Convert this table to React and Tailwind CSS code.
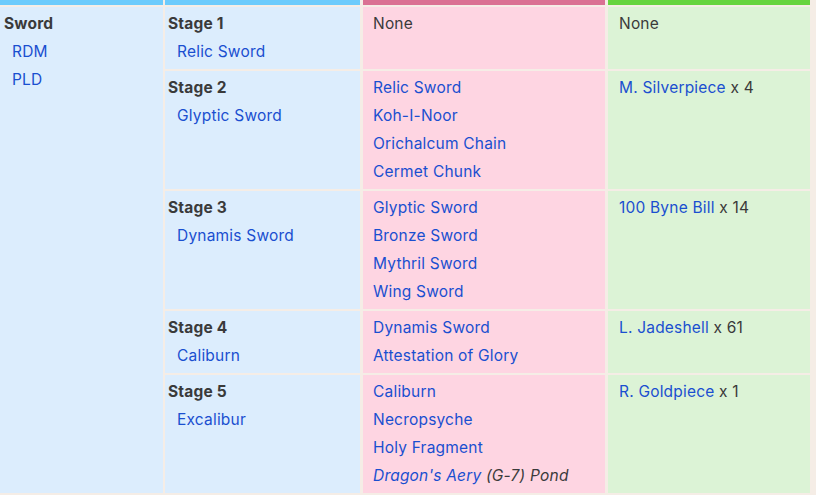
import React from "react";

const L = ({ children }) => <span className="text-[#1a4fd0]">{children}</span>;

function Cell({ w, bg, ml, pl, children }) {
  return (
    <div className={`${w} ${bg} ${ml} ${pl} pt-[3px] shrink-0`}>{children}</div>
  );
}

const rows = [
  {
    h: "h-[62px]",
    stage: "Stage 1",
    weapon: "Relic Sword",
    mats: null,
    cost: null,
  },
  {
    h: "h-[118px]",
    stage: "Stage 2",
    weapon: "Glyptic Sword",
    mats: ["Relic Sword", "Koh-I-Noor", "Orichalcum Chain", "Cermet Chunk"],
    cost: ["M. Silverpiece", "4"],
  },
  {
    h: "h-[118px]",
    stage: "Stage 3",
    weapon: "Dynamis Sword",
    mats: ["Glyptic Sword", "Bronze Sword", "Mythril Sword", "Wing Sword"],
    cost: ["100 Byne Bill", "14"],
  },
  {
    h: "h-[62px]",
    stage: "Stage 4",
    weapon: "Caliburn",
    mats: ["Dynamis Sword", "Attestation of Glory"],
    cost: ["L. Jadeshell", "61"],
  },
  {
    h: "h-[118px]",
    stage: "Stage 5",
    weapon: "Excalibur",
    mats: ["Caliburn", "Necropsyche", "Holy Fragment", "__pond"],
    cost: ["R. Goldpiece", "1"],
  },
];

export default function App() {
  return (
    <div
      className="w-[816px] h-[495px] bg-[#f5ede6] overflow-hidden text-[15.5px] tracking-[0.2px] leading-[28px] text-[#3a3a3a]"
      style={{ fontFamily: "Inter, 'Noto Sans', sans-serif" }}
    >
      <div className="flex h-[5px]">
        <div className="w-[163px] bg-[#6ccbfc]" />
        <div className="w-[195px] ml-[2px] bg-[#6ccbfc]" />
        <div className="w-[242px] ml-[3px] bg-[#da7193]" />
        <div className="w-[202px] ml-[3px] bg-[#66d43f]" />
      </div>
      <div className="flex mt-[2px]">
        <div className="w-[163px] h-[486px] bg-[#dcedfd] pl-[4px] pt-[3px] shrink-0">
          <div className="font-bold">Sword</div>
          <div className="ml-[8px]"><L>RDM</L></div>
          <div className="ml-[8px]"><L>PLD</L></div>
        </div>
        <div className="flex flex-col gap-[2px]">
          {rows.map((r, i) => (
            <div key={i} className={`flex ${r.h}`}>
              <Cell w="w-[195px]" bg="bg-[#dcedfd]" ml="ml-[2px]" pl="pl-[3px]">
                <div className="font-bold">{r.stage}</div>
                <div className="ml-[9px]"><L>{r.weapon}</L></div>
              </Cell>
              <Cell w="w-[242px]" bg="bg-[#fed5e2]" ml="ml-[3px]" pl="pl-[10px]">
                {r.mats ? (
                  r.mats.map((m) =>
                    m === "__pond" ? (
                      <div key={m} className="italic">
                        <L>Dragon's Aery</L> (G-7) Pond
                      </div>
                    ) : (
                      <div key={m}><L>{m}</L></div>
                    )
                  )
                ) : (
                  <div>None</div>
                )}
              </Cell>
              <Cell w="w-[202px]" bg="bg-[#dcf3d6]" ml="ml-[3px]" pl="pl-[11px]">
                {r.cost ? (
                  <div>
                    <L>{r.cost[0]}</L> x {r.cost[1]}
                  </div>
                ) : (
                  <div>None</div>
                )}
              </Cell>
            </div>
          ))}
        </div>
      </div>
    </div>
  );
}
